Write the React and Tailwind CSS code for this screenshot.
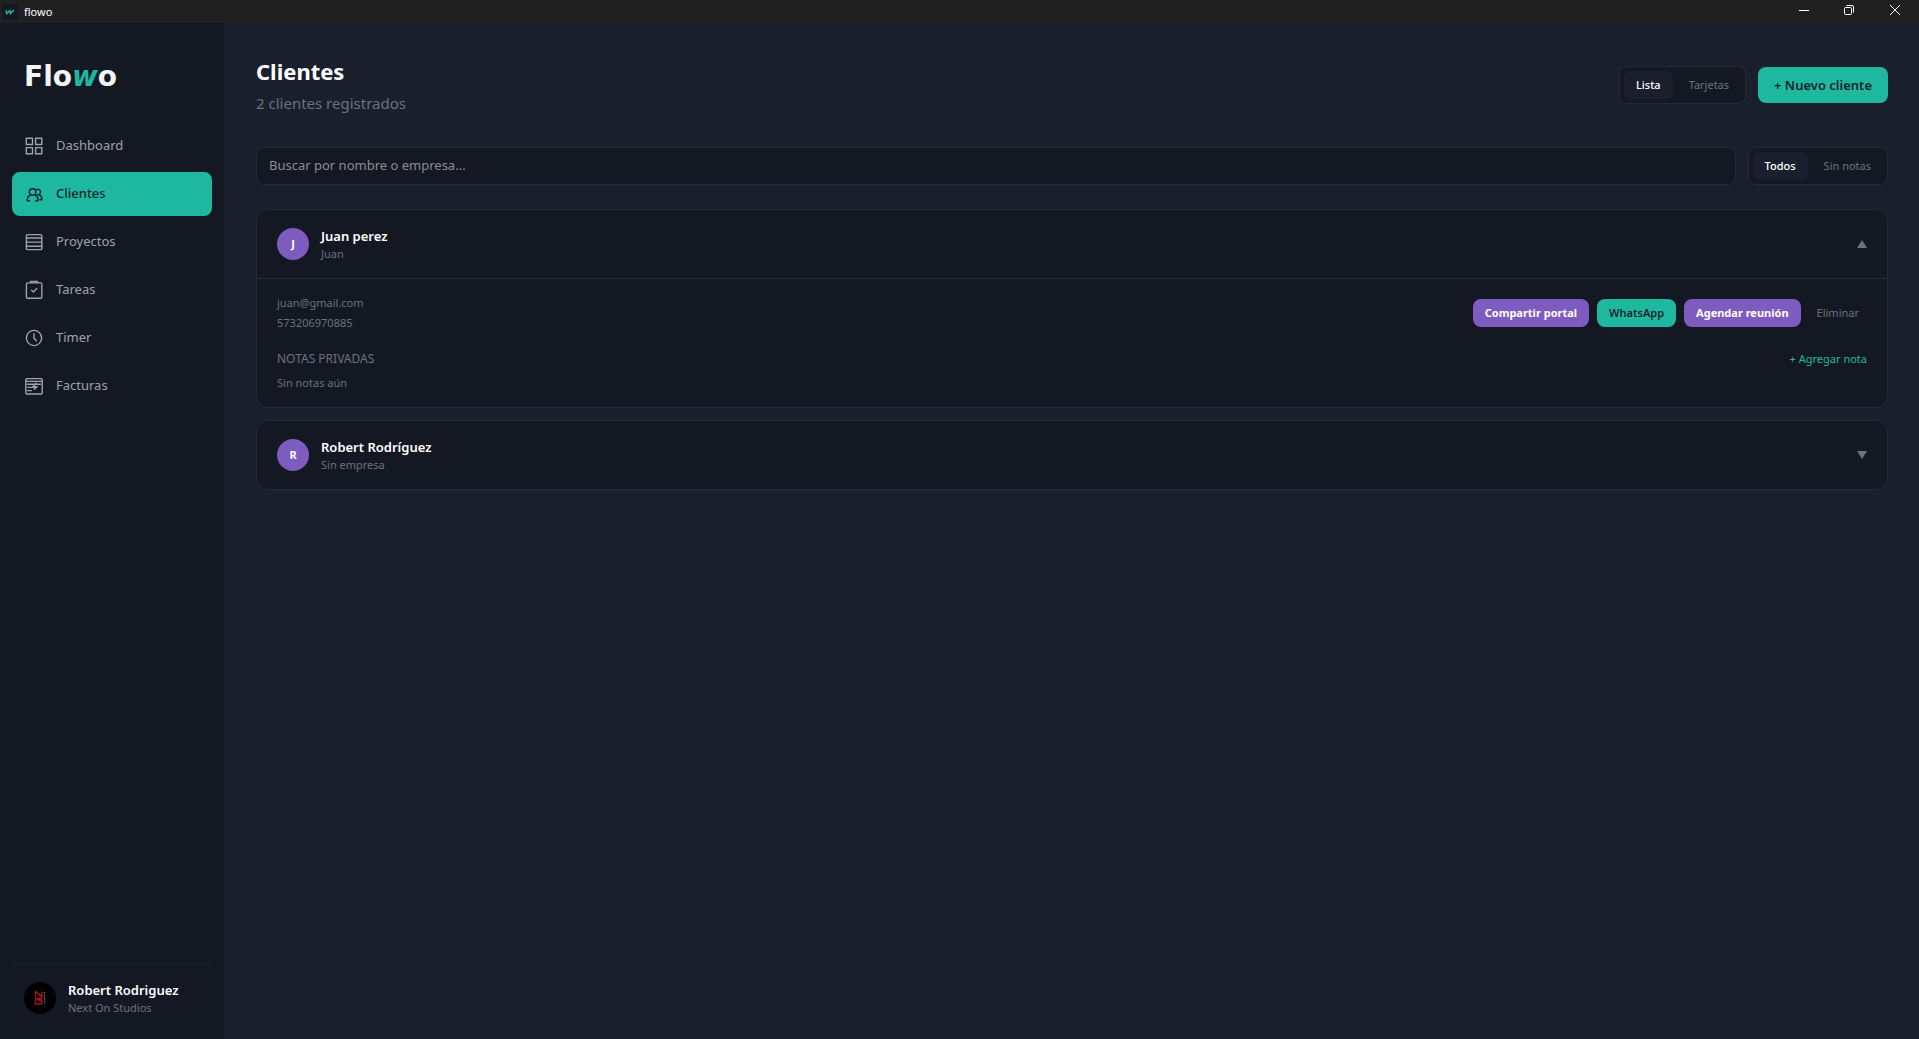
import React, { useState } from "react";

const navItems = [
  { id: "dashboard", label: "Dashboard" },
  { id: "clientes", label: "Clientes" },
  { id: "proyectos", label: "Proyectos" },
  { id: "tareas", label: "Tareas" },
  { id: "timer", label: "Timer" },
  { id: "facturas", label: "Facturas" },
];

const clients = [
  {
    id: 1,
    name: "Juan perez",
    company: "Juan",
    email: "juan@gmail.com",
    phone: "573206970885",
  },
  { id: 2, name: "Robert Rodríguez", company: "", email: "", phone: "" },
];

function NavIcon({ id }) {
  return (
    <svg
      viewBox="0 0 20 20"
      className="size-5 shrink-0"
      fill="none"
      stroke="currentColor"
      strokeWidth="1.4"
      strokeLinecap="round"
      strokeLinejoin="round"
      aria-hidden="true"
    >
      {id === "dashboard" && (
        <>
          <rect x="2.3" y="2.3" width="6.2" height="6.2" />
          <rect x="11.6" y="2.3" width="6.2" height="6.2" />
          <rect x="2.3" y="11.6" width="6.2" height="6.2" />
          <rect x="11.6" y="11.6" width="6.2" height="6.2" />
        </>
      )}
      {id === "clientes" && (
        <>
          <circle cx="8.6" cy="8" r="3.3" />
          <path d="M5.5 16.7H3.3v-1.4c0-1.8 1-3.3 2.7-4M11.2 11.3c1.6.7 2.7 2.2 2.7 4v1.4h-2.2" />
          <path d="M12.6 5.6a2.7 2.7 0 1 1 .6 5M15.2 10.8c1.6.6 2.6 2 2.6 3.7v1.2h-1.800" />
        </>
      )}
      {id === "proyectos" && (
        <>
          <rect x="2.4" y="2.6" width="15.4" height="15" rx="1.2" />
          <path d="M2.5 6h15.2M2.5 10.1h15.2M2.5 14.3h15.2" />
        </>
      )}
      {id === "tareas" && (
        <>
          <rect x="2.4" y="2.9" width="15.4" height="15.4" rx="1.2" />
          <path d="M6.5 2.6V1.5h7v1.1" />
          <path d="M7.6 10.2l1.8 1.7 3.3-3.3" />
        </>
      )}
      {id === "timer" && (
        <>
          <circle cx="10" cy="10" r="7.6" />
          <path d="M10 5.8v4.4l2.4 2.6" />
        </>
      )}
      {id === "facturas" && (
        <>
          <rect x="1.8" y="2.6" width="16.4" height="15.4" rx="1.2" />
          <path d="M2 5.4h16M3.5 8.3h13M4 11.4h7M3.5 14.6h4" />
          <path d="M12 7.3l-3.2 3.4h4.4l-3 2.6" />
        </>
      )}
    </svg>
  );
}

function Logo() {
  return (
    <h2
      className="flex font-['DejaVu_Sans',sans-serif] text-[28px] leading-7 font-bold text-[#f3f4f8]"
      aria-label="Flowo"
    >
      Flo<span className="text-[#1eb8a0] italic">w</span>o
    </h2>
  );
}

function TitleBar() {
  return (
    <header className="flex h-[23px] shrink-0 items-center bg-[#202020] text-white">
      <span className="ml-0.5 flex size-4 items-center justify-center rounded-xs bg-[#141823]">
        <svg viewBox="0 0 10 6" className="h-1.5 w-2.5" fill="none" stroke="#1eb8a0" strokeWidth="1.4" aria-hidden="true">
          <path d="M1 1.2l.6 3.4L5 1.6l.4 3L9 1" />
        </svg>
      </span>
      <span className="ml-1.5 text-[11px] leading-4">flowo</span>
      <div className="ml-auto flex self-start">
        <button aria-label="Minimizar" className="flex h-5 w-[45px] items-center justify-center">
          <svg viewBox="0 0 10 10" className="size-2.5" stroke="currentColor" aria-hidden="true">
            <path d="M0 5.5h10" />
          </svg>
        </button>
        <button aria-label="Restaurar" className="flex h-5 w-[45px] items-center justify-center">
          <svg viewBox="0 0 10 10" className="size-2.5" fill="none" stroke="currentColor" aria-hidden="true">
            <rect x="0.5" y="2.5" width="7" height="7" rx="1" />
            <path d="M2.5.5H8A1.5 1.5 0 0 1 9.5 2v5.5" />
          </svg>
        </button>
        <button aria-label="Cerrar" className="flex h-5 w-12 items-center justify-center">
          <svg viewBox="0 0 10 10" className="size-2.5" stroke="currentColor" aria-hidden="true">
            <path d="M0 0l10 10M10 0L0 10" />
          </svg>
        </button>
      </div>
    </header>
  );
}

function Sidebar() {
  return (
    <aside className="flex w-56 shrink-0 flex-col bg-[#141823] px-3 pt-10 pb-[23px]">
      <div className="mb-[33px] px-3">
        <Logo />
      </div>
      <nav className="flex flex-col gap-1">
        {navItems.map((item) => (
          <a
            key={item.id}
            href={`#${item.id}`}
            className={`flex h-11 items-center gap-3 rounded-lg px-3 text-[13px] ${
              item.id === "clientes"
                ? "bg-[#1eb8a0] font-medium text-[#1a1f2d]"
                : "text-[#9ca3af]"
            }`}
          >
            <NavIcon id={item.id} />
            {item.label}
          </a>
        ))}
      </nav>
      <div className="mt-auto flex items-center gap-3 border-t border-[#1c212d] px-3 pt-4">
        <div className="flex size-8 items-center justify-center rounded-full bg-black">
          <svg viewBox="0 0 12 16" className="h-4 w-3" fill="none" stroke="#b3141c" strokeWidth="1.3" aria-hidden="true">
            <path d="M1.5 7V1.5L8 7V1.5M8 8.5H1.5V14H6q2 0 2-2t-2-2H3.5" />
            <path d="M10.5 2v12" stroke="#666" strokeDasharray="1.5 0.7" />
          </svg>
        </div>
        <div>
          <p className="text-[13px] leading-5 font-semibold text-white">Robert Rodriguez</p>
          <p className="text-[11px] leading-4 text-[#6b7280]">Next On Studios</p>
        </div>
      </div>
    </aside>
  );
}

function Toggle({ options, value, onChange }) {
  return (
    <div className="flex gap-1 rounded-lg border border-[#252938] bg-[#141823] p-1">
      {options.map((option) => (
        <button
          key={option}
          onClick={() => onChange(option)}
          className={`rounded-md px-3 py-1.5 text-[11px] leading-4 ${
            value === option ? "bg-[#1a1f2d] font-medium text-white" : "text-[#6b7280]"
          }`}
        >
          {option}
        </button>
      ))}
    </div>
  );
}

function ClientCard({ client, open, onToggle }) {
  return (
    <article className="rounded-xl border border-[#252938] bg-[#141823]">
      <button onClick={onToggle} aria-expanded={open} className="flex w-full items-center gap-3 px-5 py-4 text-left">
        <span className="flex size-8 items-center justify-center rounded-full bg-[#7e5bbf] text-[11px] font-bold text-white">
          {client.name[0]}
        </span>
        <span className="flex flex-col">
          <span className="text-[13px] leading-5 font-semibold text-white">{client.name}</span>
          <span className="text-[11px] leading-4 text-[#6b7280]">{client.company || "Sin empresa"}</span>
        </span>
        <svg viewBox="0 0 10 8" className="ml-auto h-2 w-2.5 text-[#6b7280]" fill="currentColor" aria-hidden="true">
          <path d={open ? "M5 0l5 8H0z" : "M0 0h10L5 8z"} />
        </svg>
      </button>
      {open && (
        <div className="border-t border-[#252938] px-5 py-4 text-[11px] leading-4 text-[#6b7280]">
          <div className="flex items-center justify-between">
            <div className="flex flex-col gap-1">
              <p>{client.email}</p>
              <p>{client.phone}</p>
            </div>
            <div className="flex gap-2">
              <button className="rounded-lg bg-[#7e5bbf] px-3 py-1.5 font-bold text-white">Compartir portal</button>
              <button className="rounded-lg bg-[#1eb8a0] px-3 py-1.5 font-semibold text-[#1a1f2d]">WhatsApp</button>
              <button className="rounded-lg bg-[#7e5bbf] px-3 py-1.5 font-bold text-white">Agendar reunión</button>
              <button className="px-2 py-1.5">Eliminar</button>
            </div>
          </div>
          <div className="mt-5 mb-2 flex items-center justify-between">
            <h3 className="text-xs uppercase">Notas privadas</h3>
            <button className="text-[#1eb8a0]">+ Agregar nota</button>
          </div>
          <p>Sin notas aún</p>
        </div>
      )}
    </article>
  );
}

function App() {
  const [view, setView] = useState("Lista");
  const [filter, setFilter] = useState("Todos");
  const [search, setSearch] = useState("");
  const [openId, setOpenId] = useState(1);

  const filtered = clients.filter(
    (client) =>
      client.name.toLowerCase().includes(search.toLowerCase()) ||
      client.company.toLowerCase().includes(search.toLowerCase())
  );

  return (
    <div className="flex min-h-screen flex-col bg-[#1a1f2d] font-['Noto_Sans',sans-serif]">
      <TitleBar />
      <div className="flex grow">
        <Sidebar />
        <main className="grow p-8 pr-[31px]">
          <div className="mb-8 flex items-center justify-between">
            <div>
              <h1 className="text-[22px] leading-8 font-bold text-white">Clientes</h1>
              <p className="mt-1 text-[15px] leading-6 text-[#6b7280]">2 clientes registrados</p>
            </div>
            <div className="flex items-center gap-3">
              <Toggle options={["Lista", "Tarjetas"]} value={view} onChange={setView} />
              <button className="rounded-lg bg-[#1eb8a0] px-4 py-2 text-[13px] leading-5 font-semibold text-[#1a1f2d]">
                + Nuevo cliente
              </button>
            </div>
          </div>

          <div className="mb-6 flex gap-3">
            <input
              type="text"
              aria-label="Buscar clientes"
              placeholder="Buscar por nombre o empresa..."
              value={search}
              onChange={(e) => setSearch(e.target.value)}
              className="min-w-0 grow rounded-lg border border-[#252938] bg-[#141823] px-3 text-[13px] text-white outline-none placeholder:text-[#8b8d93]"
            />
            <Toggle options={["Todos", "Sin notas"]} value={filter} onChange={setFilter} />
          </div>

          <div className="flex flex-col gap-3">
            {filtered.map((client) => (
              <ClientCard
                key={client.id}
                client={client}
                open={openId === client.id}
                onToggle={() => setOpenId(openId === client.id ? null : client.id)}
              />
            ))}
          </div>
        </main>
      </div>
    </div>
  );
}

export default App;
